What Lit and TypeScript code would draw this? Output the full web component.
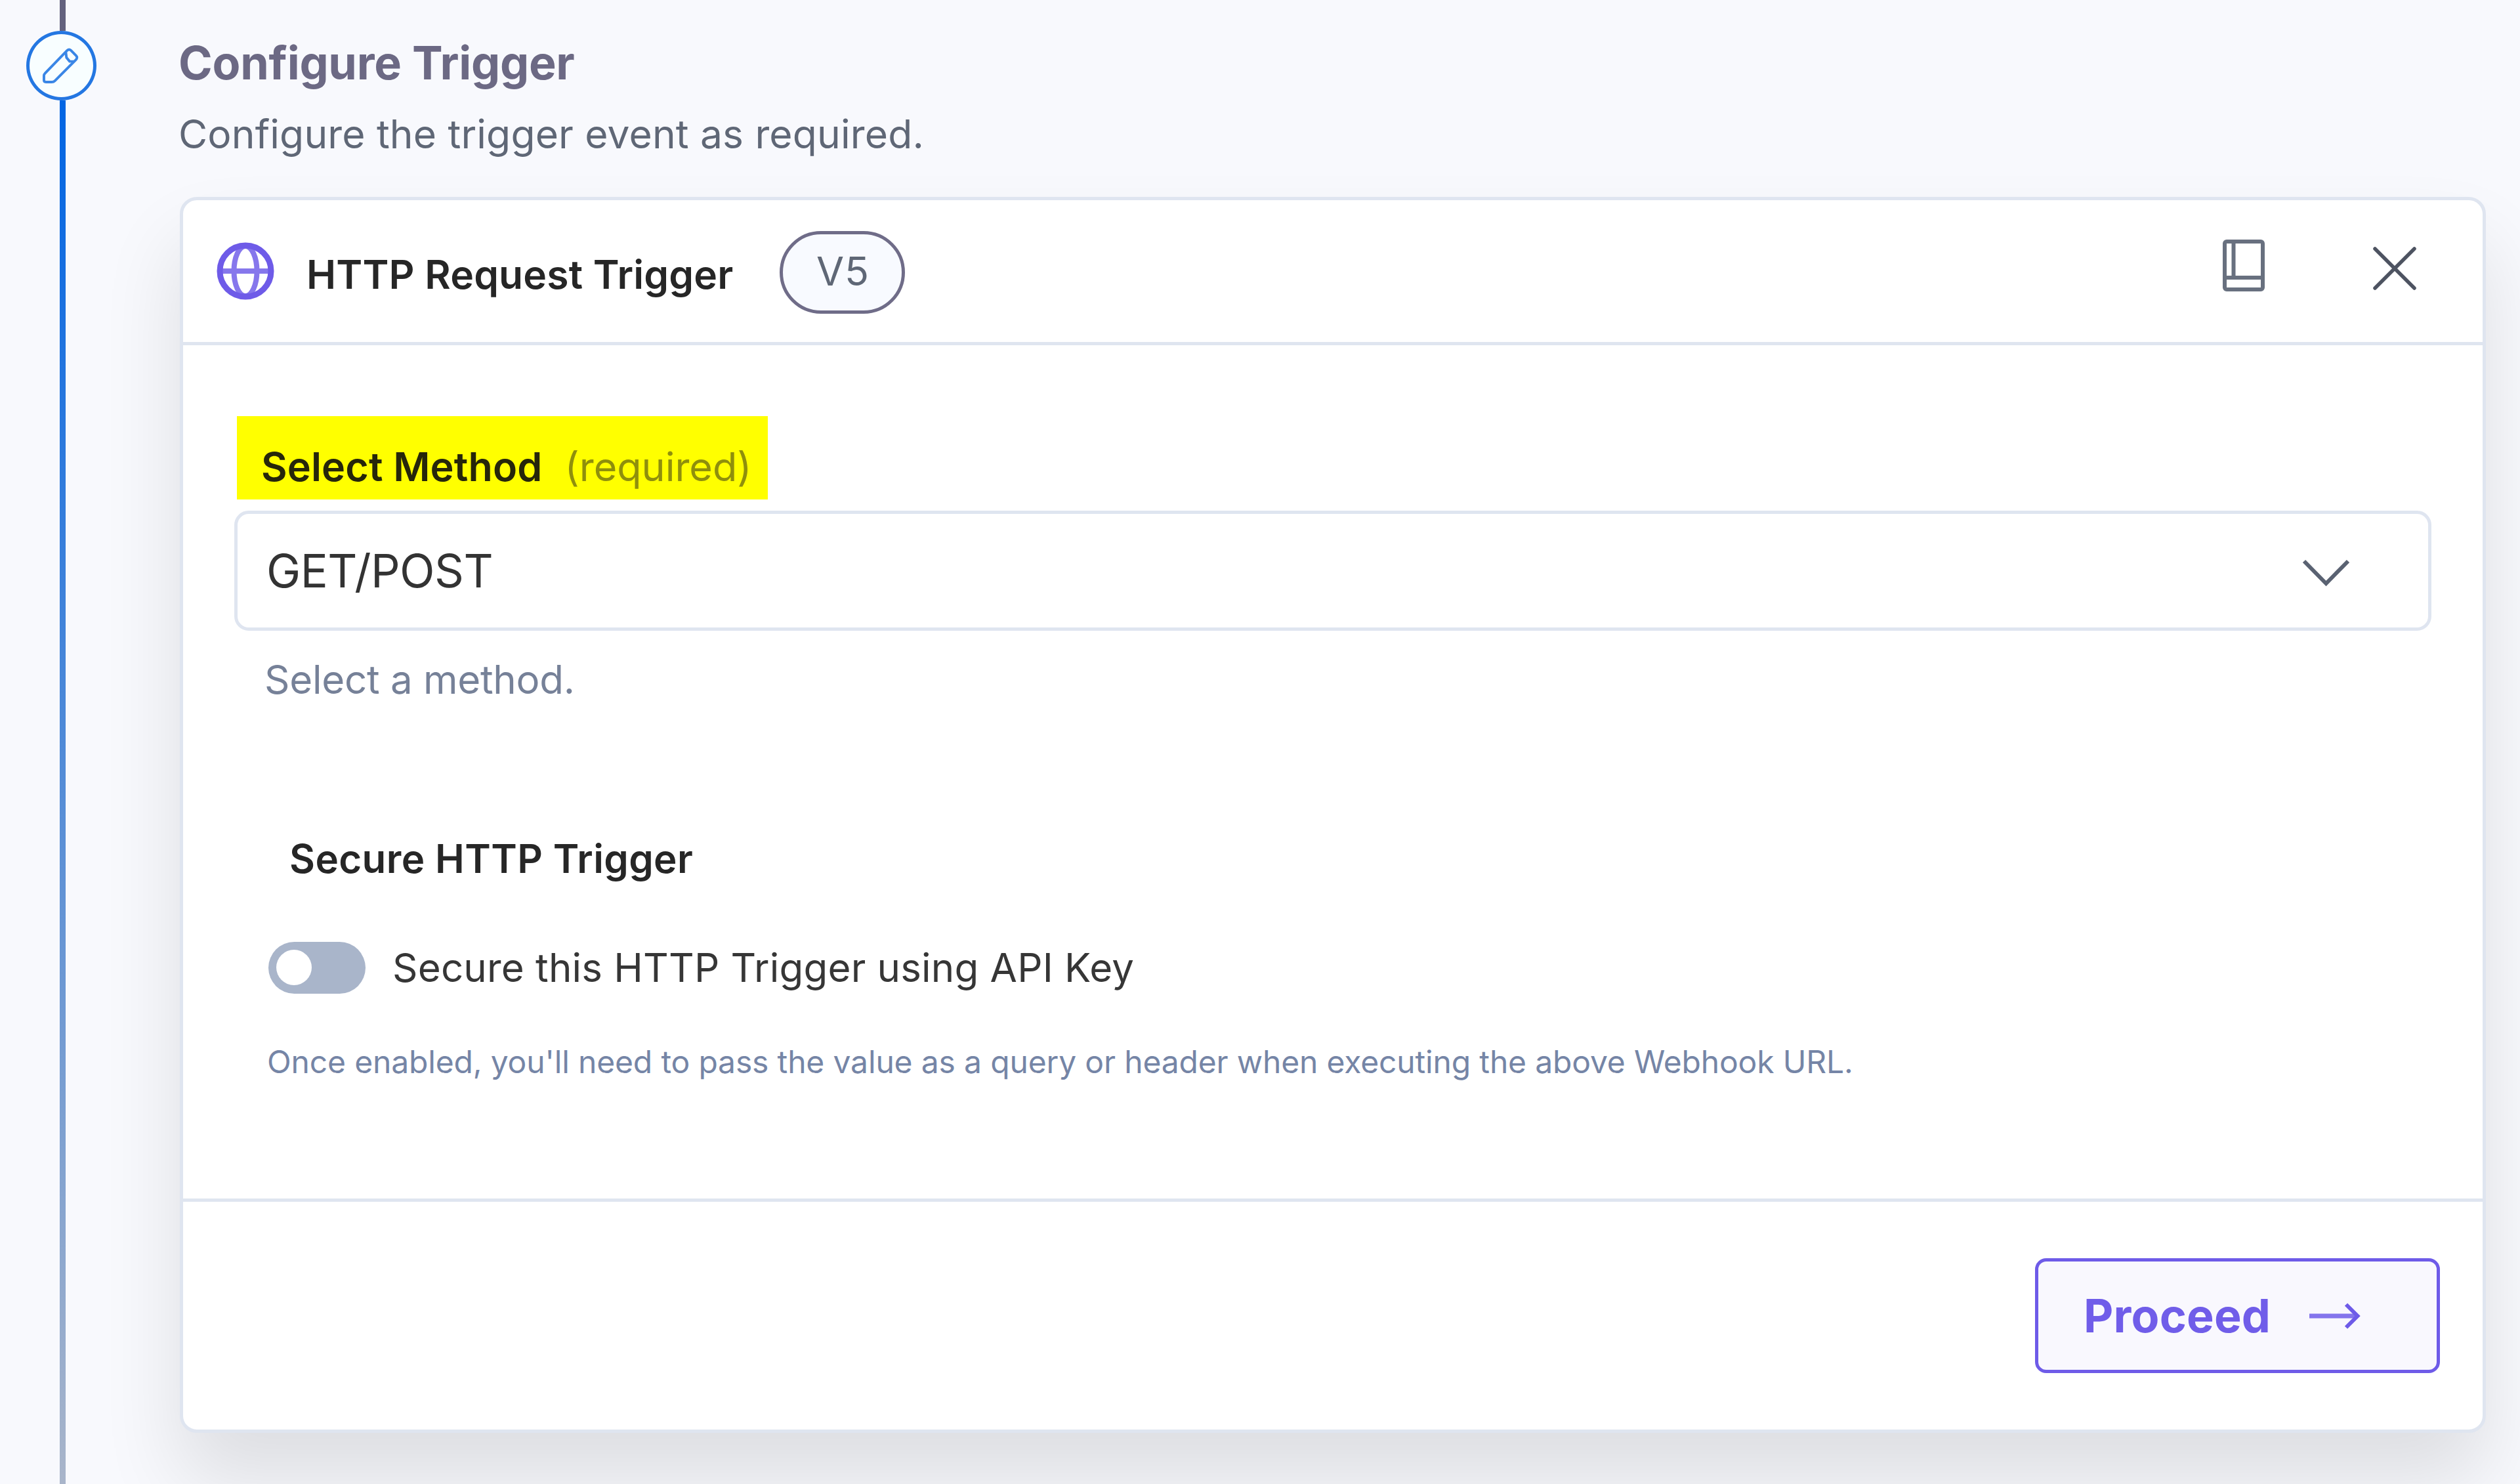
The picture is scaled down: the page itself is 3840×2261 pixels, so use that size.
import { LitElement, html, css } from "lit";
import { customElement, property, state } from "lit/decorators.js";
import { classMap } from "lit/directives/class-map.js";

@customElement("step-rail")
export class StepRail extends LitElement {
  static styles = css`
    :host {
      display: flex;
      flex-direction: column;
      align-items: flex-start;
    }
    .before {
      width: 9px;
      height: 47px;
      margin-left: 91px;
      background: #64627e;
    }
    .marker {
      box-sizing: border-box;
      display: flex;
      align-items: center;
      justify-content: center;
      width: 107px;
      height: 106px;
      margin-left: 40px;
      border: 5px solid #2477e2;
      border-radius: 50%;
      background: #f8feff;
    }
    .marker svg {
      width: 55px;
      height: 55px;
      margin-right: 2px;
    }
    .after {
      flex: 1;
      width: 9px;
      margin-left: 91px;
      background: linear-gradient(#0265e3, #a9b5ca);
    }
  `;

  render() {
    return html`
      <div class="before"></div>
      <div class="marker">
        <svg viewBox="0 0 56 56" fill="none" stroke="#3a86e6" stroke-width="4" stroke-linejoin="round">
          <path d="M4 39 L38 4 Q41 1 44 4 L52 12 Q55 15 51 19 L19 51 Q17 53 14 53 L5 53 Q2 53 2 50 L2 43 Q2 41 4 39 Z" />
          <path d="M36 7 L37 15 L42 21 L48 21" />
        </svg>
      </div>
      <div class="after"></div>
    `;
  }
}

@customElement("toggle-switch")
export class ToggleSwitch extends LitElement {
  @property({ type: Boolean }) checked = false;

  static styles = css`
    :host {
      display: block;
    }
    .track {
      box-sizing: border-box;
      display: flex;
      align-items: center;
      width: 148px;
      height: 79px;
      padding: 0 12px;
      border-radius: 40px;
      background: #a9b5ca;
    }
    .track.on {
      justify-content: flex-end;
      background: #6e5be8;
    }
    .knob {
      width: 54px;
      height: 54px;
      border-radius: 50%;
      background: #fff;
    }
  `;

  render() {
    return html`<div class=${classMap({ track: true, on: this.checked })}><div class="knob"></div></div>`;
  }
}

@customElement("app-root")
export class AppRoot extends LitElement {
  @state() private method = "GET/POST";
  @state() private secured = false;

  static styles = css`
    :host {
      display: grid;
      grid-template-columns: 274px 1fr;
      height: 2261px;
      overflow: hidden;
      background: #f8f9fd;
      font-family: Inter, "Liberation Sans", sans-serif;
      font-optical-sizing: none;
      font-size: 60px;
      line-height: 80px;
      color: #262626;
      white-space: nowrap;
    }
    .content {
      padding: 46px 52px 0 0;
      min-width: 0;
    }
    .title {
      margin: 0 0 18px -2px;
      font-size: 70px;
      line-height: 100px;
      font-weight: 700;
      letter-spacing: -0.26px;
      color: #6c6984;
    }
    .subtitle {
      margin: 0 0 56px -2px;
      font-size: 60.5px;
      letter-spacing: 0.17px;
      color: #5f6776;
    }
    .card {
      box-sizing: border-box;
      height: 1883px;
      display: flex;
      flex-direction: column;
      border: 5px solid #dfe5f0;
      border-radius: 26px;
      background: #fff;
      box-shadow: 0 73px 122px rgba(0, 0, 0, 0.11);
    }
    .head {
      display: flex;
      align-items: center;
      height: 216px;
      padding: 0 100px 0 50px;
      border-bottom: 5px solid #dfe5f0;
    }
    .globe {
      width: 90px;
      height: 90px;
    }
    .name {
      width: 651px;
      margin-left: 48px;
      padding-top: 9px;
      font-weight: 600;
      font-size: 60.5px;
      letter-spacing: 0.2px;
    }
    .badge {
      box-sizing: border-box;
      display: flex;
      align-items: center;
      justify-content: center;
      width: 191px;
      height: 126px;
      margin: 3px auto 0 70px;
      padding: 0 0 4px 2px;
      border: 5px solid #6f6c88;
      border-radius: 63px;
      background: #f8faff;
      color: #5f6776;
      font-size: 61px;
      letter-spacing: 1px;
    }
    .book {
      width: 68px;
      height: 82px;
      margin: -18px 162px 0 0;
    }
    .close {
      width: 68px;
      height: 68px;
      margin-top: -9px;
    }
    .body {
      flex: 1;
      padding: 108px 78px 0;
    }
    .label {
      box-sizing: border-box;
      display: flex;
      width: 809px;
      height: 127px;
      margin: 0 0 17px 4px;
      padding: 37px 0 0 37px;
      background: #ff0;
      color: #26260a;
      font-weight: 600;
      font-size: 61px;
      letter-spacing: 0.13px;
    }
    .required {
      margin-left: 34px;
      font-weight: 400;
      letter-spacing: 0;
      color: #8f8f0c;
    }
    .select {
      box-sizing: border-box;
      display: flex;
      align-items: center;
      justify-content: space-between;
      height: 183px;
      padding: 0 118px 0 44px;
      border: 5px solid #dfe5f0;
      border-radius: 22px;
      font-size: 70px;
      letter-spacing: -0.55px;
      color: #333;
    }
    .chevron {
      width: 76px;
      height: 46px;
      margin-top: 4px;
    }
    .hint {
      margin: 34px 0 0 46px;
      letter-spacing: -0.27px;
      color: #768198;
    }
    .section {
      margin: 193px 0 86px 84px;
      font-weight: 600;
      letter-spacing: 0.39px;
    }
    .switch-row {
      display: flex;
      align-items: center;
      gap: 41px;
      margin-left: 52px;
      letter-spacing: 0.2px;
      color: #363636;
    }
    .note {
      margin: 74px 0 0 50px;
      font-size: 48px;
      line-height: 60px;
      letter-spacing: -0.16px;
      color: #7585a6;
    }
    .foot {
      box-sizing: border-box;
      display: flex;
      justify-content: flex-end;
      height: 352px;
      padding: 86px 65px 0;
      border-top: 5px solid #dfe5f0;
    }
    .proceed {
      box-sizing: border-box;
      display: flex;
      align-items: center;
      width: 617px;
      height: 175px;
      padding: 0 0 0 69px;
      border: 5px solid #6e5be8;
      border-radius: 17px;
      background: #f9f8fe;
      color: #705de9;
      font: inherit;
      font-size: 70px;
      font-weight: 650;
      letter-spacing: 0.2px;
    }
    .arrow {
      width: 84px;
      height: 46px;
      margin-left: 57px;
    }
  `;

  render() {
    return html`
      <step-rail></step-rail>
      <div class="content">
        <div class="title">Configure Trigger</div>
        <div class="subtitle">Configure the trigger event as required.</div>
        <div class="card">
          <div class="head">
            <svg class="globe" viewBox="0 0 90 90" fill="none">
              <g stroke="#8677ec" stroke-width="8">
                <ellipse cx="45" cy="45" rx="17.500" ry="38" />
                <path d="M6 45 H84" />
              </g>
              <circle cx="45" cy="45" r="39" stroke="#6e5be8" stroke-width="9" />
            </svg>
            <div class="name">HTTP Request Trigger</div>
            <div class="badge">V5</div>
            <svg class="book" viewBox="0 0 68 82" fill="none" stroke="#68707f" stroke-width="6">
              <rect x="5" y="5" width="58" height="73" rx="3" />
              <path d="M18.500 5 V60 M5 60 H63" />
            </svg>
            <svg class="close" viewBox="0 0 68 68" fill="none" stroke="#4d5361" stroke-width="5.500" stroke-linecap="round">
              <path d="M4 4 L64 64 M64 4 L4 64" />
            </svg>
          </div>
          <div class="body">
            <div class="label">Select Method<span class="required">(required)</span></div>
            <div class="select">
              ${this.method}
              <svg class="chevron" viewBox="0 0 76 46" fill="none" stroke="#5a6272" stroke-width="6">
                <path d="M5 6 L38.500 40 L72 6" />
              </svg>
            </div>
            <div class="hint">Select a method.</div>
            <div class="section">Secure HTTP Trigger</div>
            <div class="switch-row">
              <toggle-switch ?checked=${this.secured} @click=${() => (this.secured = !this.secured)}></toggle-switch>
              Secure this HTTP Trigger using API Key
            </div>
            <div class="note">
              Once enabled, you'll need to pass the value as a query or header when executing the above Webhook URL.
            </div>
          </div>
          <div class="foot">
            <button class="proceed">
              Proceed
              <svg class="arrow" viewBox="0 0 84 46" fill="none" stroke-width="6">
                <path d="M2 23 H76" stroke="#8475ec" stroke-width="7" />
                <path d="M58 5.500 L75.500 23 L58 40.500" stroke="#6e5be8" />
              </svg>
            </button>
          </div>
        </div>
      </div>
    `;
  }
}
